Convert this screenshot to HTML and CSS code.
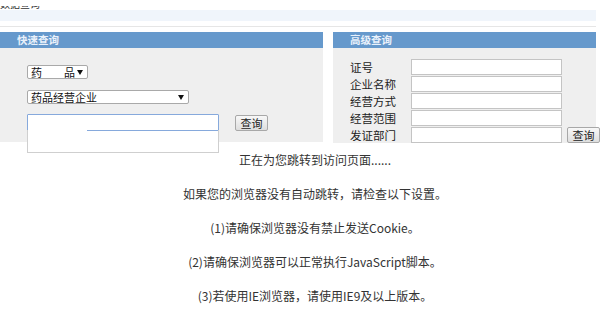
FILE: index.html
```html
<!DOCTYPE html>
<html lang="zh-CN">
<head>
    <meta charset="UTF-8">
    <meta name="viewport" content="width=device-width, initial-scale=1.0">
    <title>药品查询</title>
    <link rel="stylesheet" href="styles.css">
</head>
<body>
    <div class="top-title"><div class="top-clip"><span>数据查询</span></div></div>
    <div class="top-band"></div>
    <div class="top-rule"></div>

    <div class="panels">
        <div class="panel panel-quick">
            <div class="panel-head">快速查询</div>
            <div class="panel-body">
                <div class="fake-select select-type">
                    <span>药　　品</span><i class="arrow"></i>
                </div>
                <div class="fake-select select-kind">
                    <span>药品经营企业</span><i class="arrow"></i>
                </div>
                <div class="search-row">
                    <div class="input-wrap">
                        <input type="text" class="quick-input">
                        <div class="suggest"></div>
                    </div>
                    <button class="btn">查询</button>
                </div>
            </div>
        </div>

        <div class="panel panel-adv">
            <div class="panel-head">高级查询</div>
            <div class="panel-body">
                <div class="adv-row"><label>证号</label><input type="text"></div>
                <div class="adv-row"><label>企业名称</label><input type="text"></div>
                <div class="adv-row"><label>经营方式</label><input type="text"></div>
                <div class="adv-row"><label>经营范围</label><input type="text"></div>
                <div class="adv-row"><label>发证部门</label><input type="text"><button class="btn">查询</button></div>
            </div>
        </div>
    </div>

    <div class="notice">
        <p>正在为您跳转到访问页面......</p>
        <p>如果您的浏览器没有自动跳转，请检查以下设置。</p>
        <p>(1)请确保浏览器没有禁止发送Cookie。</p>
        <p>(2)请确保浏览器可以正常执行JavaScript脚本。</p>
        <p>(3)若使用IE浏览器，请使用IE9及以上版本。</p>
    </div>
</body>
</html>
```

FILE: styles.css
```css
:root {
    --head-blue: #6699cc;
    --panel-gray: #efefef;
    --text: #333;
    --field-border: #c4c4c4;
}

body {
    margin: 0;
    width: 600px;
    overflow: hidden;
    font-family: "Noto Sans CJK SC", "Microsoft YaHei", sans-serif;
    color: var(--text);
    background: #fff;
}

/* only the lower edge of the page title is left in view */
.top-title {
    height: 10px;
    padding-top: 6px;
    box-sizing: border-box;
}

.top-clip {
    height: 5px;
    overflow: hidden;
}

.top-clip span {
    display: block;
    margin-top: -9px;
    font-size: 10px;
    line-height: 14px;
    color: #333;
}

.top-band {
    width: 596px;
    height: 11px;
    background: #f0f5fb;
}

.top-rule {
    width: 596px;
    height: 1px;
    margin-top: 5px;
    background: #e6e6e6;
}

.panels {
    display: flex;
    align-items: flex-start;
    gap: 10px;
    width: 596px;
    margin-top: 5px;
}

.panel-quick {
    width: 323px;
    flex-shrink: 0;
}

.panel-adv {
    width: 263px;
    flex-shrink: 0;
}

.panel-head {
    height: 16px;
    line-height: 16px;
    padding-left: 17px;
    background: var(--head-blue);
    color: #e9f1fb;
    font-size: 10.5px;
    font-weight: bold;
}

.panel-body {
    background: var(--panel-gray);
    box-sizing: border-box;
}

.panel-quick .panel-body {
    height: 94px;
    padding: 17px 0 0 27px;
}

.fake-select {
    display: flex;
    align-items: center;
    justify-content: space-between;
    box-sizing: border-box;
    height: 14px;
    padding: 0 4px 0 3px;
    border: 1px solid #a9a9a9;
    border-radius: 2px;
    background: #fff;
    font-size: 11px;
    color: #111;
}

.select-type {
    width: 61px;
    margin-bottom: 11px;
}

.select-kind {
    width: 162px;
    margin-bottom: 10px;
}

.arrow {
    width: 0;
    height: 0;
    border-left: 3px solid transparent;
    border-right: 3px solid transparent;
    border-top: 5px solid #111;
}

.search-row {
    display: flex;
    align-items: flex-start;
    gap: 16px;
}

.input-wrap {
    position: relative;
}

.quick-input {
    display: block;
    box-sizing: border-box;
    width: 192px;
    height: 17px;
    margin: 0;
    border: 1px solid #86a9dc;
    border-radius: 1px;
    outline: none;
    background: #fff;
}

.suggest {
    position: absolute;
    top: 16px;
    left: 0;
    z-index: 2;
    box-sizing: border-box;
    width: 192px;
    height: 23px;
    border: 1px solid #cfcfcf;
    border-top: none;
    background: #fff;
}

.suggest::before {
    content: "";
    position: absolute;
    top: 0;
    left: 0;
    width: 190px;
    height: 1px;
    background: linear-gradient(to right, #fff 59px, #86a9dc 59px);
}

.btn {
    box-sizing: border-box;
    flex-shrink: 0;
    width: 33px;
    height: 16px;
    margin-top: 1px;
    padding: 0;
    border: 1px solid #a8a8a8;
    border-radius: 2px;
    background: linear-gradient(#f8f8f8, #dedede);
    font-family: inherit;
    font-size: 11px;
    line-height: 14px;
    color: #222;
}

.panel-adv .panel-body {
    height: 95px;
    padding: 11px 0 0 17px;
}

.adv-row {
    display: flex;
    align-items: center;
    height: 16px;
    margin-bottom: 1px;
}

.adv-row label {
    flex-shrink: 0;
    width: 61px;
    font-size: 11.5px;
    color: #222;
}

.adv-row input {
    flex-shrink: 0;
    box-sizing: border-box;
    width: 151px;
    height: 16px;
    margin: 0;
    border: 1px solid var(--field-border);
    background: #fff;
}

.adv-row .btn {
    margin: 0 0 0 5px;
}

.notice {
    padding-left: 30px;
    text-align: center;
    font-size: 12px;
    line-height: 34px;
    color: #333;
}

.notice p {
    margin: 0;
}
```
